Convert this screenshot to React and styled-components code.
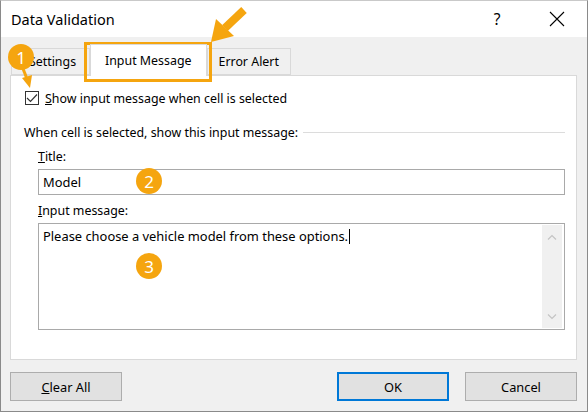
import React from 'react';
import styled, { createGlobalStyle } from 'styled-components';

const GlobalStyle = createGlobalStyle`
  html, body {
    margin: 0;
    padding: 0;
    background: #ffffff;
  }
  body {
    font-family: "Noto Sans", "Open Sans", sans-serif;
    color: #000;
  }
  * {
    box-sizing: border-box;
  }
`;

const ORANGE = '#f5a50f';

const App = () => {
  return (
    <>
      <GlobalStyle />
      <Dialog>
        <TitleBar>
          <Caption>Data Validation</Caption>
          <HelpButton>?</HelpButton>
          <CloseButton>
            <svg width="16" height="16" viewBox="0 0 16 16">
              <path d="M1 1 L15 15 M15 1 L1 15" stroke="#000" strokeWidth="1.1" fill="none" />
            </svg>
          </CloseButton>
        </TitleBar>

        <Body>
          <TabStrip>
            <Tab>Settings</Tab>
            <Tab $active>Input Message</Tab>
            <Tab>Error Alert</Tab>
          </TabStrip>

          <Panel>
            <CheckRow>
              <CheckBox>
                <svg width="12" height="10" viewBox="0 0 12 10">
                  <path d="M1 5 L4.5 8.5 L11 1.5" stroke="#333" strokeWidth="1.2" fill="none" />
                </svg>
              </CheckBox>
              <span>
                <u>S</u>how input message when cell is selected
              </span>
            </CheckRow>

            <GroupHeader>
              <span>When cell is selected, show this input message:</span>
              <Rule />
            </GroupHeader>

            <Field>
              <FieldLabel>
                <u>T</u>itle:
              </FieldLabel>
              <TextBox>Model</TextBox>
            </Field>

            <Field>
              <FieldLabel>
                <u>I</u>nput message:
              </FieldLabel>
              <MessageBox>
                <MessageText>
                  Please choose a vehicle model from these options.
                  <Caret />
                </MessageText>
                <ScrollBar>
                  <svg width="10" height="6" viewBox="0 0 10 6">
                    <path d="M1 5.5 L5 1.5 L9 5.5" stroke="#c4c4c4" strokeWidth="1.2" fill="none" />
                  </svg>
                  <svg width="10" height="6" viewBox="0 0 10 6">
                    <path d="M1 0.5 L5 4.5 L9 0.5" stroke="#c4c4c4" strokeWidth="1.2" fill="none" />
                  </svg>
                </ScrollBar>
              </MessageBox>
            </Field>
          </Panel>

          <Footer>
            <Button>
              <u>C</u>lear All
            </Button>
            <Spacer />
            <Button $primary>OK</Button>
            <Button>Cancel</Button>
          </Footer>
        </Body>

        {/* callouts drawn over the dialog */}
        <Callouts width="588" height="412" viewBox="0 0 588 412">
          <path d="M244 10 L225 28" stroke={ORANGE} strokeWidth="8" strokeLinecap="butt" />
          <polygon points="211,42 216,19 234,36" fill={ORANGE} />
          <path d="M22 66 L27 79" stroke={ORANGE} strokeWidth="3" />
          <polygon points="30,88 22,78 32,75" fill={ORANGE} />
        </Callouts>
        <TabHighlight />
        <Badge $x={20} $y={56}>1</Badge>
        <Badge $x={148} $y={180}>2</Badge>
        <Badge $x={148} $y={265}>3</Badge>
      </Dialog>
    </>
  );
};

const Dialog = styled.div`
  position: relative;
  width: 588px;
  height: 412px;
  display: flex;
  flex-direction: column;
  border: 1px solid #8a8a8a;
  border-top-color: #c9c9c9;
  background: #f0f0f0;
  font-size: 12.4px;
  overflow: hidden;
`;

const TitleBar = styled.div`
  height: 37px;
  display: flex;
  align-items: center;
  background: #ffffff;
  padding-left: 10px;
`;

const Caption = styled.div`
  flex: 1;
  font-size: 14.5px;
  padding-bottom: 1px;
`;

const HelpButton = styled.div`
  width: 46px;
  text-align: center;
  font-size: 15.5px;
  margin-right: 14px;
`;

const CloseButton = styled.div`
  width: 46px;
  display: flex;
  justify-content: center;
  margin-right: 7px;
`;

const Body = styled.div`
  flex: 1;
  display: flex;
  flex-direction: column;
  padding: 6px 10px 10px 9px;
`;

const TabStrip = styled.div`
  display: flex;
  align-items: flex-end;
  height: 32px;
  padding-left: 1px;
`;

const Tab = styled.div`
  display: flex;
  align-items: center;
  justify-content: center;
  height: ${(p) => (p.$active ? '32px' : '27px')};
  padding: 0 ${(p) => (p.$active ? '14px' : '11px')} 1px;
  margin-bottom: ${(p) => (p.$active ? '-1px' : '0')};
  background: ${(p) => (p.$active ? '#ffffff' : '#f0f0f0')};
  border: 1px solid #d9d9d9;
  border-bottom: ${(p) => (p.$active ? 'none' : '1px solid #d9d9d9')};
  position: relative;
  z-index: ${(p) => (p.$active ? 1 : 0)};
  &:first-child {
    width: 79px;
    padding-left: 15px;
  }
`;

const Panel = styled.div`
  height: 285px;
  background: #ffffff;
  border: 1px solid #d9d9d9;
  padding: 14px 11px 0 14px;
  display: flex;
  flex-direction: column;
`;

const CheckRow = styled.label`
  display: flex;
  align-items: center;
  gap: 6px;
  height: 16px;
`;

const CheckBox = styled.div`
  width: 14px;
  height: 14px;
  border: 1px solid #333;
  background: #fff;
  display: flex;
  align-items: center;
  justify-content: center;
`;

const GroupHeader = styled.div`
  display: flex;
  align-items: center;
  gap: 5px;
  margin-top: 17px;
  margin-left: -1px;
  height: 18px;
  span {
    white-space: nowrap;
  }
`;

const Rule = styled.div`
  flex: 1;
  height: 1px;
  background: #dcdcdc;
`;

const Field = styled.div`
  display: flex;
  flex-direction: column;
  margin-left: 13px;
  margin-top: 7px;
`;

const FieldLabel = styled.div`
  height: 18px;
  line-height: 18px;
  margin-bottom: 3px;
`;

const TextBox = styled.div`
  height: 26px;
  border: 1px solid #a9a9a9;
  padding: 0 4px;
  display: flex;
  align-items: center;
  font-size: 12.9px;
`;

const MessageBox = styled.div`
  height: 107px;
  border: 1px solid #a9a9a9;
  display: flex;
  padding: 1px 2px 1px 0;
`;

const MessageText = styled.div`
  flex: 1;
  padding: 3px 4px;
  font-size: 12.9px;
  line-height: 16px;
`;

const Caret = styled.span`
  display: inline-block;
  width: 1px;
  height: 15px;
  background: #000;
  vertical-align: -3px;
  margin-left: 1px;
`;

const ScrollBar = styled.div`
  width: 20px;
  background: #f0f0f0;
  display: flex;
  flex-direction: column;
  justify-content: space-between;
  align-items: center;
  padding: 9px 0 8px;
`;

const Footer = styled.div`
  display: flex;
  gap: 16px;
  margin-top: 12px;
`;

const Spacer = styled.div`
  flex: 1;
`;

const Button = styled.div`
  width: 112px;
  height: 29px;
  display: flex;
  align-items: center;
  justify-content: center;
  background: #e1e1e1;
  border: ${(p) => (p.$primary ? '2px solid #0078d7' : '1px solid #adadad')};
  font-size: 12.8px;
`;

const Callouts = styled.svg`
  position: absolute;
  left: -1px;
  top: -1px;
  pointer-events: none;
`;

const TabHighlight = styled.div`
  position: absolute;
  left: 83px;
  top: 41px;
  width: 128px;
  height: 40px;
  border: 3px solid ${ORANGE};
  pointer-events: none;
`;

const Badge = styled.div`
  position: absolute;
  left: ${(p) => p.$x - 13}px;
  top: ${(p) => p.$y - 13}px;
  width: 26px;
  height: 26px;
  border-radius: 50%;
  background: ${ORANGE};
  color: #fff;
  font-size: 17px;
  display: flex;
  align-items: center;
  justify-content: center;
  line-height: 1;
`;

export default App;
